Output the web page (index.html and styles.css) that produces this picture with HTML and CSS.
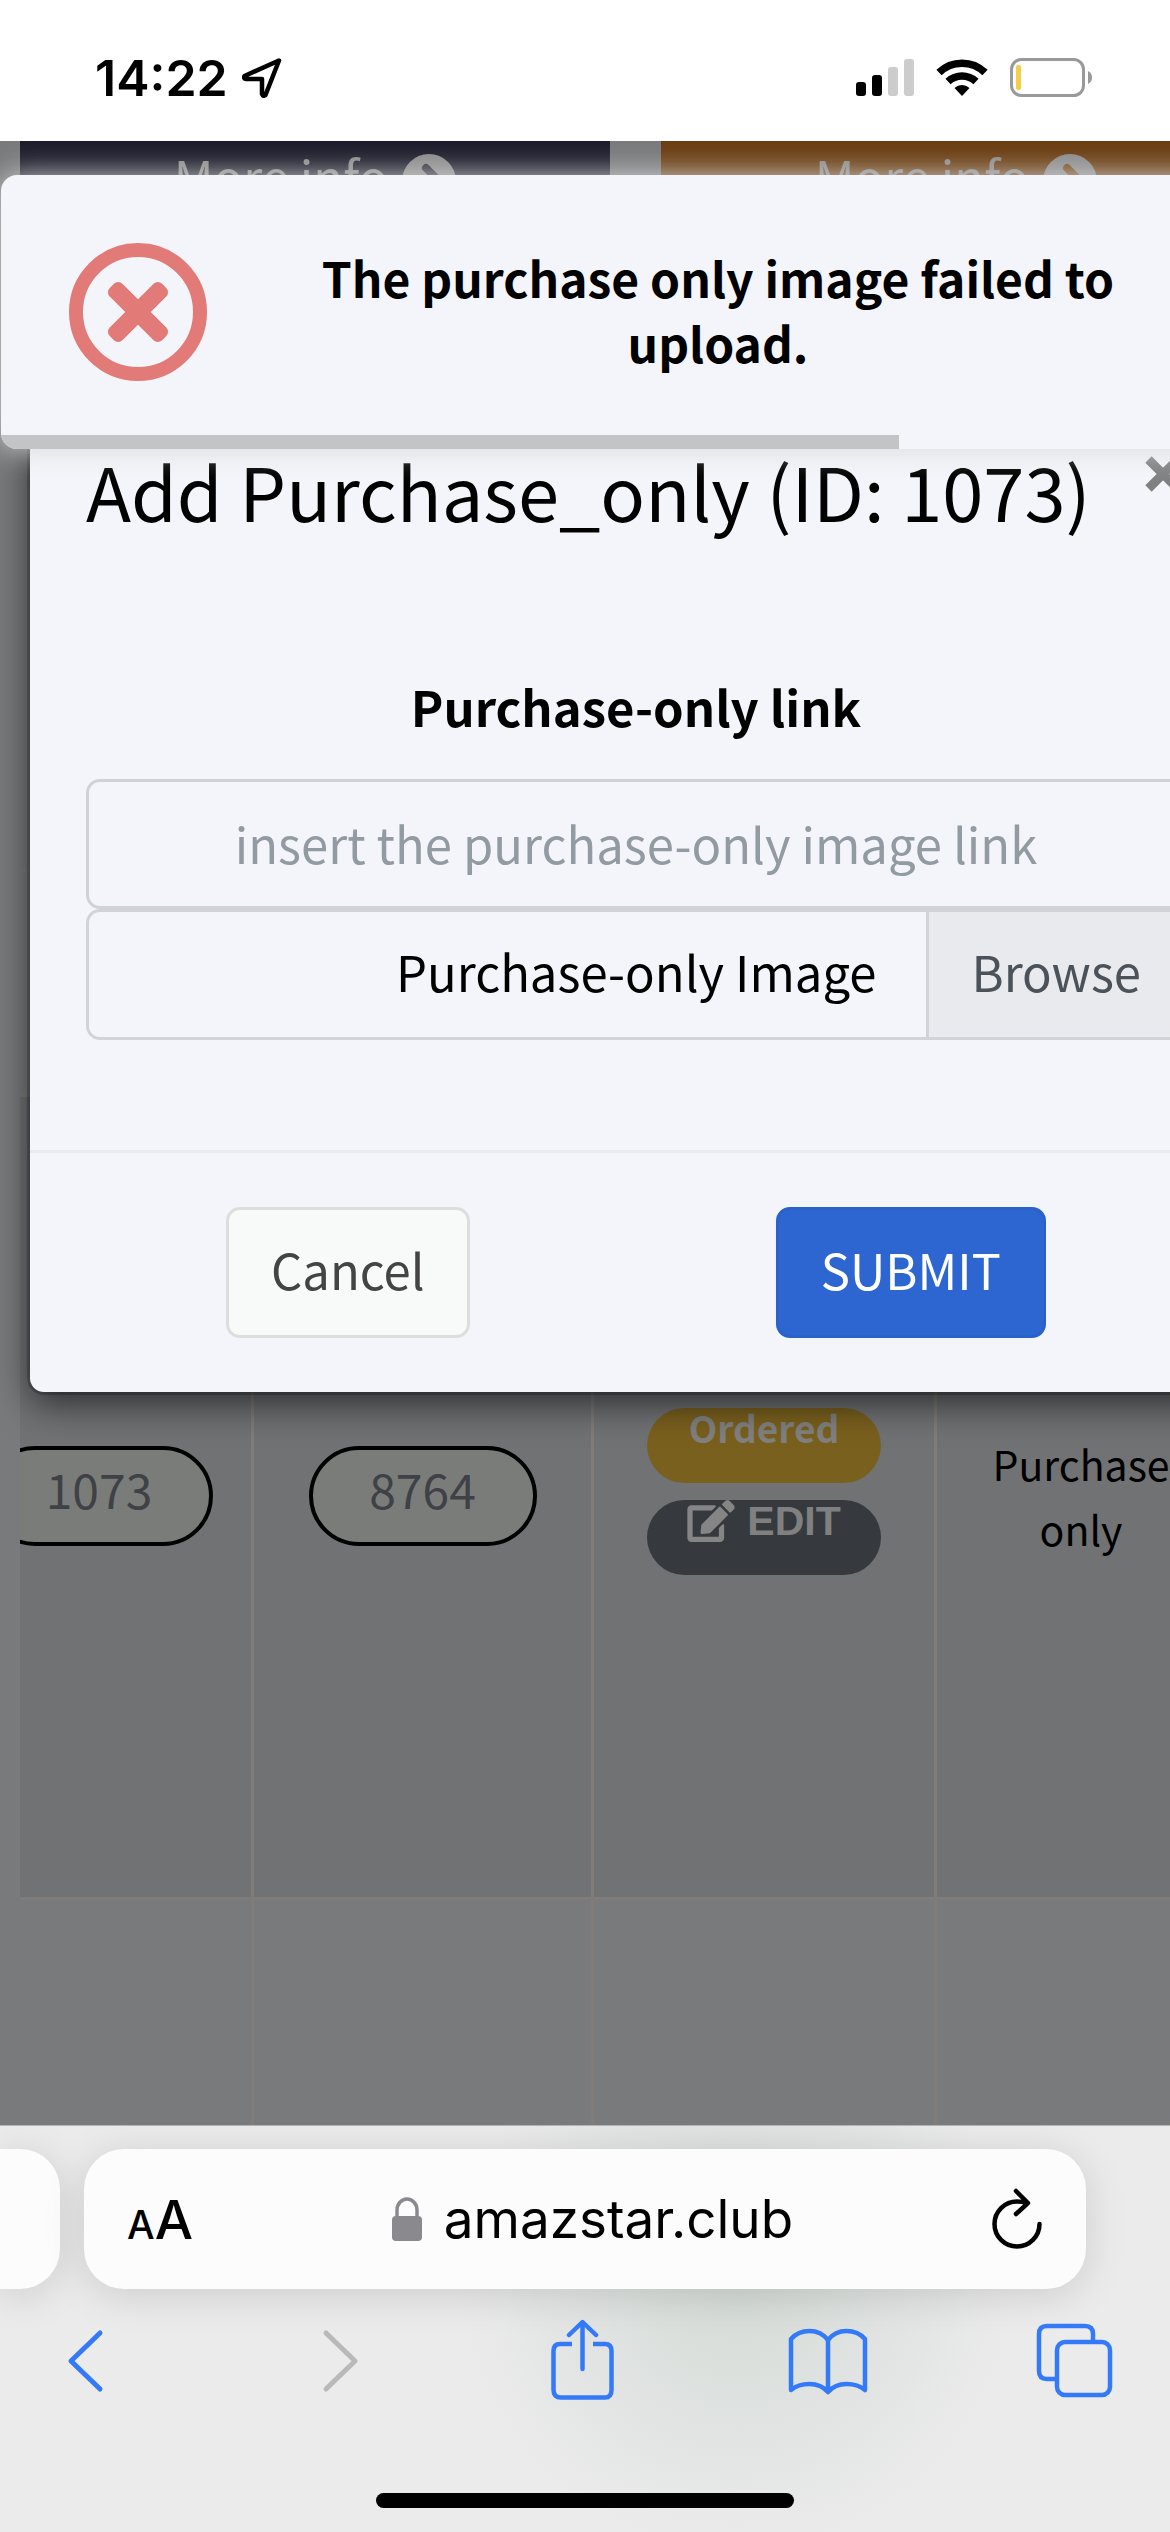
FILE: index.html
```html
<!DOCTYPE html>
<html lang="en">
<head>
  <meta charset="UTF-8" />
  <meta name="viewport" content="width=device-width, initial-scale=1.0"/>
  <title>amazstar.club</title>
  <link rel="stylesheet" href="styles.css">
</head>
<body>
  <div class="screen">
    <header class="status-bar">
      <div class="status-left">
        <span class="time">14:22</span>
        <svg width="40" height="40" viewBox="0 0 40 40" fill="none" stroke="#000" stroke-width="4.500" stroke-linejoin="round"><path d="M37 2.500 L2.500 18 Q1.500 21 4 21 H20 V36 Q21 39 23.500 37 Z"/></svg>
      </div>
      <div class="status-right">
        <svg width="58" height="38" viewBox="0 0 58 38">
          <rect x="0" y="23" width="10" height="14" rx="3"/>
          <rect x="16" y="16" width="10" height="21" rx="3"/>
          <rect x="32" y="8" width="10" height="29" rx="3" fill="#ccc"/>
          <rect x="48" y="0" width="10" height="37" rx="3" fill="#ccc"/>
        </svg>
        <svg width="52" height="38" viewBox="0 0 52 38" fill="none" stroke="#000">
          <path d="M3 13.500 A33 33 0 0 1 49 13.500" stroke-width="7.500"/>
          <path d="M12 22.500 A20.500 20.500 0 0 1 40 22.500" stroke-width="7.500"/>
          <path d="M18.500 29 A11 11 0 0 1 33.500 29 L26 37 Z" fill="#000" stroke="none"/>
        </svg>
        <svg width="82" height="40" viewBox="0 0 82 40">
          <rect x="1.500" y="1.500" width="72" height="36" rx="10" fill="none" stroke="#999" stroke-width="3"/>
          <rect x="6" y="7" width="5" height="25" rx="2" fill="#f5ce45"/>
          <path d="M78 13 Q82 15 82 19.500 Q82 24 78 26 Z" fill="#999"/>
        </svg>
      </div>
    </header>

    <main class="page">
      <div class="cards">
        <a href="#" class="card card-navy">
          <span>More info</span>
          <svg width="54" height="54" viewBox="0 0 54 54"><circle cx="27" cy="27" r="27" fill="#8b8b8b"/><path d="M24 14 L37 27 L24 40" fill="none" stroke="#2b2937" stroke-width="8" stroke-linecap="round" stroke-linejoin="round"/></svg>
        </a>
        <a href="#" class="card card-orange">
          <span>More info</span>
          <svg width="54" height="54" viewBox="0 0 54 54"><circle cx="27" cy="27" r="27" fill="#8b8b8b"/><path d="M24 14 L37 27 L24 40" fill="none" stroke="#75481a" stroke-width="8" stroke-linecap="round" stroke-linejoin="round"/></svg>
        </a>
      </div>

      <div class="table-scroll">
        <table class="orders">
          <colgroup>
            <col class="col-id"><col class="col-code"><col class="col-status"><col class="col-type">
          </colgroup>
          <tr class="row-head"><td></td><td></td><td></td><td></td></tr>
          <tr class="row-order">
            <td><input class="pill" type="text" value="1073" aria-label="ID"></td>
            <td><input class="pill" type="text" value="8764" aria-label="Code"></td>
            <td>
              <div class="actions">
                <button class="tag tag-ordered">Ordered</button>
                <button class="tag tag-edit">
                  <svg width="48" height="42" viewBox="0 0 576 512" fill="#858585"><path d="M402.600 83.200l90.200 90.200c3.800 3.800 3.800 10 0 13.800L274.400 405.600l-92.800 10.300c-12.400 1.400-22.900-9.100-21.500-21.500l10.300-92.800L388.800 83.200c3.800-3.800 10-3.800 13.800 0zm162-22.900l-48.800-48.800c-15.200-15.200-39.900-15.200-55.200 0l-35.400 35.400c-3.800 3.800-3.800 10 0 13.800l90.200 90.200c3.800 3.800 10 3.800 13.800 0l35.400-35.400c15.200-15.300 15.200-40 0-55.200zM384 346.200V448H64V128h229.800c3.200 0 6.200-1.300 8.500-3.500l40-40c7.600-7.600 2.200-20.500-8.500-20.500H48C21.500 64 0 85.500 0 112v352c0 26.500 21.500 48 48 48h352c26.500 0 48-21.500 48-48V306.200c0-10.700-12.900-16-20.500-8.500l-40 40c-2.200 2.300-3.500 5.300-3.500 8.500z"/></svg>
                  EDIT
                </button>
              </div>
            </td>
            <td>Purchase only</td>
          </tr>
          <tr class="row-next"><td></td><td></td><td></td><td></td></tr>
        </table>
      </div>

      <form class="modal" onsubmit="return false">
        <div class="modal-header">
          <h2>Add Purchase_only (ID: 1073)</h2>
          <button type="button" class="close" aria-label="Close">
            <svg width="36" height="36" viewBox="0 0 36 36" stroke="#7f8082" stroke-width="9"><path d="M3.500 3.500 L32.500 32.500 M32.500 3.500 L3.500 32.500"/></svg>
          </button>
        </div>
        <div class="modal-body">
          <label class="field-label" for="link">Purchase-only link</label>
          <input class="field" type="text" id="link" placeholder="insert the purchase-only image link">
          <input class="file-input" type="file" id="image">
          <label class="file" for="image">
            <span class="file-name">Purchase-only Image</span>
            <span class="file-browse">Browse</span>
          </label>
        </div>
        <div class="modal-footer">
          <button type="button" class="btn btn-cancel">Cancel</button>
          <button type="submit" class="btn btn-submit">SUBMIT</button>
        </div>
      </form>

      <div class="toast" role="alert">
        <div class="toast-content">
          <svg width="138" height="138" viewBox="0 0 138 138" fill="#e27a77">
            <circle cx="69" cy="69" r="62" fill="none" stroke="#e27a77" stroke-width="14"/>
            <rect x="32" y="60" width="74" height="18" rx="6" transform="rotate(45 69 69)"/>
            <rect x="32" y="60" width="74" height="18" rx="6" transform="rotate(-45 69 69)"/>
          </svg>
          <p>The purchase only image failed to upload.</p>
        </div>
        <div class="toast-timer"></div>
      </div>
    </main>

    <footer class="browser">
      <div class="address-row">
        <div class="tab-edge"></div>
        <div class="address">
          <button class="text-size" aria-label="Text size"><small>A</small>A</button>
          <a href="#" class="host">
            <svg width="30" height="44" viewBox="0 0 30 44"><path d="M5 22 V13 A10 11 0 0 1 25 13 V22" fill="none" stroke="#8a898e" stroke-width="3.500"/><rect x="0" y="19" width="30" height="25" rx="4" fill="#8a898e"/></svg>
            amazstar.club
          </a>
          <button class="reload" aria-label="Reload">
            <svg width="50" height="62" viewBox="0 0 50 62" fill="none" stroke="#000" stroke-width="4.500" stroke-linecap="round" stroke-linejoin="round"><path d="M47.500 36 A22.500 22.500 0 1 1 25 13.500 Q30 13.500 35 15 M24 3 L36 15 L24 26"/></svg>
          </button>
        </div>
      </div>
      <nav class="toolbar">
        <button aria-label="Back"><svg width="80" height="84" viewBox="0 0 80 84" fill="none" stroke="#347af8" stroke-width="5" stroke-linecap="round" stroke-linejoin="round"><path d="M55 14 L26 42 L55 70"/></svg></button>
        <button aria-label="Forward" disabled><svg width="80" height="84" viewBox="0 0 80 84" fill="none" stroke="#b9b9b9" stroke-width="5" stroke-linecap="round" stroke-linejoin="round"><path d="M33 14 L62 42 L33 70"/></svg></button>
        <button aria-label="Share"><svg width="80" height="84" viewBox="0 0 80 84" fill="none" stroke="#347af8" stroke-width="4.500" stroke-linecap="round" stroke-linejoin="round"><path stroke-linecap="butt" d="M32 25 H20 Q13.500 25 13.500 32 V71 Q13.500 78.500 21 78.500 H65 Q71.500 78.500 71.500 71 V32 Q71.500 25 65 25 H53"/><path d="M42.500 50 V4 M29 16 L42.500 3 L56 16"/></svg></button>
        <button aria-label="Bookmarks"><svg width="80" height="84" viewBox="0 0 80 84" fill="none" stroke="#347af8" stroke-width="4.500" stroke-linecap="round" stroke-linejoin="round"><path d="M40 21 Q33 12 21.500 12 Q10 12 3 20 V71 Q10 65 21.500 65 Q33 65 40 73 Q47 65 58.500 65 Q70 65 77 71 V20 Q70 12 58.500 12 Q47 12 40 21 V73"/></svg></button>
        <button aria-label="Tabs"><svg width="80" height="84" viewBox="0 0 80 84" fill="none" stroke="#347af8" stroke-width="4.500"><path d="M20 60 H12 Q4 60 4 52 V15 Q4 7 12 7 H50 Q58 7 58 15 V23"/><rect x="22" y="23" width="53" height="53" rx="8"/></svg></button>
      </nav>
      <div class="home-indicator"></div>
    </footer>
  </div>
</body>
</html>
```

FILE: styles.css
```css
* {
  box-sizing: border-box;
}

body {
  margin: 0;
  font-family: "Noto Sans CJK SC", sans-serif;
  font-size: 49px;
  color: #000;
}

button, input {
  font-family: inherit;
  font-size: inherit;
  border: none;
  background: none;
  padding: 0;
  margin: 0;
}

svg {
  display: block;
  flex: none;
}

a {
  color: inherit;
  text-decoration: none;
}

.screen {
  height: 100vh;
  display: flex;
  flex-direction: column;
  overflow: hidden;
}

/* status bar */
.status-bar {
  flex: none;
  height: 141px;
  padding: 14px 78px 0 95px;
  display: flex;
  justify-content: space-between;
  align-items: center;
  background: #fff;
  font-family: Inter, sans-serif;
}

.status-left {
  display: flex;
  align-items: center;
  gap: 14px;
}

.time {
  font-size: 50px;
  font-weight: 600;
}

.status-right {
  display: flex;
  align-items: center;
  gap: 22px;
}

/* page behind the dialog */
.page {
  flex: 1;
  position: relative;
  overflow: hidden;
  background: #797a7c;
}

.cards {
  display: grid;
  grid-template-columns: 1fr 1fr;
  gap: 51px;
  margin: 0 -81px 0 20px;
}

.card {
  height: 80px;
  display: flex;
  justify-content: center;
  align-items: center;
  gap: 14px;
  line-height: 70px;
  color: #8b8b8b;
}

.card span {
  padding-bottom: 10px;
}

.card-navy {
  background: #1c1c2b;
}

.card-orange {
  background: #6b3e12;
}

.table-scroll {
  margin: 648px 0 0 20px;
  overflow: hidden;
}

.orders {
  width: calc(100% + 144px);
  margin-left: -86px;
  table-layout: fixed;
  border-collapse: collapse;
}

.col-id {
  width: 317px;
}

.col-code {
  width: 340px;
}

.col-status {
  width: 343px;
}

.orders td {
  border: 3px solid #7f7c7a;
  padding: 0 48px;
  text-align: center;
  vertical-align: middle;
  font-size: 41px;
  line-height: 65px;
}

.row-head td {
  height: 225px;
}

.orders .row-order td {
  height: 803px;
  padding-bottom: 2px;
  background: #717274;
}

.row-next td {
  height: 804px;
}

.pill {
  display: block;
  width: 228px;
  height: 100px;
  margin: 0 auto;
  padding-bottom: 16px;
  border: 4px solid #000;
  border-radius: 50px;
  background: #7a7c7a;
  color: #3f4146;
  font-size: 48px;
  text-align: center;
}

.actions {
  display: flex;
  flex-direction: column;
  align-items: center;
  gap: 17px;
  padding-bottom: 10px;
}

.tag {
  width: 234px;
  height: 75px;
  border-radius: 38px;
  display: flex;
  justify-content: center;
  align-items: center;
  gap: 12px;
  font-weight: bold;
  color: #808080;
}

.tag-ordered {
  padding-bottom: 36px;
  background: #7a601e;
  font-size: 37px;
}

.tag-edit {
  padding-bottom: 32px;
  background: #363a3e;
  font-family: "Liberation Sans", Arial, sans-serif;
  font-size: 41px;
}

/* dialog, wider than the window */
.modal {
  position: absolute;
  top: 259px;
  left: 30px;
  right: -72px;
  border-radius: 14px;
  background: #f4f5fa;
  box-shadow: 0 0 0 3px rgba(0, 0, 0, 0.2), 0 12px 36px rgba(0, 0, 0, 0.6);
}

.modal-header {
  display: flex;
  justify-content: space-between;
  align-items: flex-start;
  padding: 47px 61px 47px 56px;
}

.modal-header h2 {
  margin: 0;
  font-size: 74px;
  font-weight: normal;
  line-height: 86px;
}

.close {
  padding-top: 9px;
}

.modal-body {
  padding: 90px 56px 110px;
}

.field-label {
  display: block;
  margin-bottom: 37px;
  line-height: 72px;
  font-weight: bold;
  text-align: center;
}

.field {
  display: block;
  width: 100%;
  height: 130px;
  padding-bottom: 4px;
  border: 3px solid #d0d2da;
  border-radius: 14px;
  text-align: center;
}

.field::placeholder {
  color: #939ba2;
}

.file-input {
  position: absolute;
  opacity: 0;
}

.file {
  display: flex;
  height: 131px;
  border: 3px solid #d0d4d9;
  border-radius: 14px;
  overflow: hidden;
  line-height: 118px;
}

.file-name {
  flex: 1;
  padding-right: 50px;
  text-align: right;
}

.file-browse {
  padding: 0 42px;
  border-left: 3px solid #d0d4d9;
  background: #e9eaed;
  color: #4b5259;
}

.modal-footer {
  display: flex;
  justify-content: space-around;
  padding: 54px 43px;
  border-top: 3px solid #e9eaed;
}

.btn {
  height: 131px;
  padding: 0 42px 9px;
  border: 3px solid #ddd;
  border-radius: 14px;
}

.btn-cancel {
  background: #f8f9f9;
  color: #444;
}

.btn-submit {
  background: #2d66d1;
  border-color: #2962c8;
  color: #fff;
}

/* toast */
.toast {
  position: absolute;
  top: 34px;
  left: 1px;
  right: -72px;
  border-radius: 16px;
  overflow: hidden;
  background: #f4f5fa;
  box-shadow: 0 0 30px #d9d9d9;
}

.toast-content {
  display: flex;
  align-items: center;
  gap: 35px;
  height: 260px;
  padding: 14px 48px 0 68px;
}

.toast-content p {
  flex: 1;
  margin: 0;
  padding-bottom: 4px;
  text-align: center;
  font-size: 48px;
  font-weight: 600;
  line-height: 65px;
}

.toast-timer {
  width: 898px;
  height: 14px;
  background: #c3c4c6;
}

/* browser controls */
.browser {
  flex: none;
  height: 407px;
  display: flex;
  flex-direction: column;
  border-top: 1px solid #b5b5b5;
  background: radial-gradient(circle at 63% 36%, #d3dad6 0, rgba(235, 235, 235, 0) 280px), #ebebeb;
  font-family: Inter, sans-serif;
}

.address-row {
  display: flex;
  gap: 24px;
  padding: 23px 84px 0 0;
}

.tab-edge {
  width: 60px;
  height: 140px;
  border-radius: 0 40px 40px 0;
  background: #fcfcfc;
  box-shadow: 0 6px 40px rgba(0, 0, 0, 0.13);
}

.address {
  flex: 1;
  height: 140px;
  padding: 0 44px 0 43px;
  display: flex;
  justify-content: space-between;
  align-items: center;
  border-radius: 40px;
  background: #fcfcfc;
  box-shadow: 0 6px 40px rgba(0, 0, 0, 0.13);
}

.text-size {
  font-size: 54px;
  font-weight: 500;
}

.text-size small {
  font-size: 39px;
}

.host {
  display: flex;
  align-items: center;
  gap: 22px;
  font-size: 53px;
}

.toolbar {
  display: flex;
  justify-content: space-between;
  padding: 30px 55px 0 45px;
}

.home-indicator {
  width: 418px;
  height: 15px;
  margin: auto auto 24px;
  border-radius: 8px;
  background: #000;
}
```
